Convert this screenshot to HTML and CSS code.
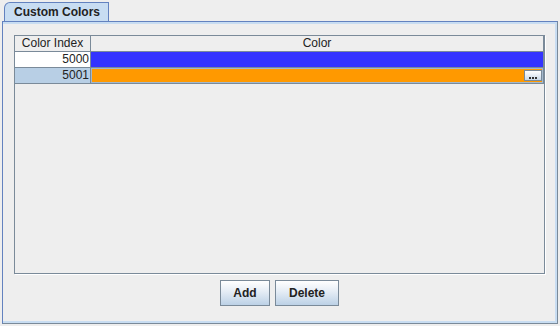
FILE: index.html
```html
<!DOCTYPE html>
<html lang="en">
<head>
    <meta charset="UTF-8">
    <title>Custom Colors</title>
    <link rel="stylesheet" href="styles.css">
</head>
<body>
    <div class="window">
        <div class="tab-row">
            <div class="tab">Custom Colors</div>
        </div>

        <div class="panel">
            <div class="scroll-pane">
                <div class="table-row header">
                    <div class="cell index">Color Index</div>
                    <div class="cell color">Color</div>
                </div>
                <div class="table-row">
                    <div class="cell index num">5000</div>
                    <div class="cell color swatch-blue"></div>
                </div>
                <div class="table-row">
                    <div class="cell index num selected">5001</div>
                    <div class="cell color swatch-orange editing">
                        <button class="more-btn"><span class="dots"></span></button>
                    </div>
                </div>
            </div>

            <div class="button-group">
                <button class="btn btn-add">Add</button>
                <button class="btn btn-delete">Delete</button>
            </div>
        </div>
    </div>
</body>
</html>
```

FILE: styles.css
```css
html, body {
    margin: 0;
    padding: 0;
}
body {
    background: #eeeeee;
    font-family: "Liberation Sans", Arial, sans-serif;
    font-size: 12px;
    color: #000;
}
.window {
    width: 560px;
    height: 326px;
    box-sizing: border-box;
    padding: 2px 2px 0 2px;
}

/* tab strip */
.tab-row {
    height: 19px;
    padding-left: 2px;
}
.tab {
    width: 105px;
    height: 19px;
    box-sizing: border-box;
    border: 1px solid #6382bf;
    border-bottom: 0;
    border-top-left-radius: 6px;
    background: #c8ddf2;
    font-weight: bold;
    padding-left: 9px;
    line-height: 18px;
    color: #222;
}

/* content panel */
.panel {
    height: 303px;
    box-sizing: border-box;
    border: 1px solid;
    border-color: #6382bf #7a8a99 #7a8a99 #6382bf;
    box-shadow: inset 0 2px 0 #c8ddf2, inset -2px -2px 0 #c8ddf2;
    padding: 13px 12px 17px 11px;
    display: flex;
    flex-direction: column;
}

/* table */
.scroll-pane {
    height: 239px;
    box-sizing: border-box;
    border: 1px solid #7a8a99;
    box-shadow: 1px 1px 0 #fff;
    background: #eeeeee;
}
.table-row {
    display: flex;
    height: 16px;
    box-sizing: border-box;
    border-bottom: 1px solid #7a8a99;
}
.cell {
    box-sizing: border-box;
    line-height: 15px;
    white-space: nowrap;
    color: #222;
}
.cell.index {
    width: 76px;
    border-right: 1px solid #7a8a99;
    background: #fff;
}
.cell.color {
    flex: 1;
    border-right: 1px solid #7a8a99;
}
.header .cell {
    background: #eeeeee;
    text-align: center;
}
.num {
    text-align: right;
    padding-right: 1px;
}
.selected {
    background: #b8cfe5 !important;
}
.swatch-blue {
    background: #3333ff;
}
.swatch-orange {
    background: #ff9900;
}
.editing {
    box-shadow: inset 0 0 0 1px #a3b8cc;
    display: flex;
    justify-content: flex-end;
    align-items: center;
    padding-right: 1px;
}
.more-btn {
    width: 18px;
    height: 11px;
    margin: 0;
    padding: 0 0 1px 0;
    border: 1px solid #7a8a99;
    background: linear-gradient(#ffffff, #e6edf5 50%, #c8d8e8);
    display: flex;
    align-items: flex-end;
    justify-content: center;
}
.dots {
    display: block;
    width: 2px;
    height: 2px;
    margin-right: 6px;
    background: #333;
    box-shadow: 3px 0 #333, 6px 0 #333;
}

/* buttons */
.button-group {
    display: flex;
    justify-content: center;
    gap: 5px;
    margin-top: 6px;
}
.btn {
    height: 26px;
    margin: 0;
    padding: 0;
    border: 1px solid #7a8a99;
    background: linear-gradient(#ffffff, #e4ecf5 45%, #bcd1e6);
    font-family: inherit;
    font-size: 12px;
    font-weight: bold;
    color: #222;
}
.btn-add {
    width: 50px;
}
.btn-delete {
    width: 64px;
}
```
